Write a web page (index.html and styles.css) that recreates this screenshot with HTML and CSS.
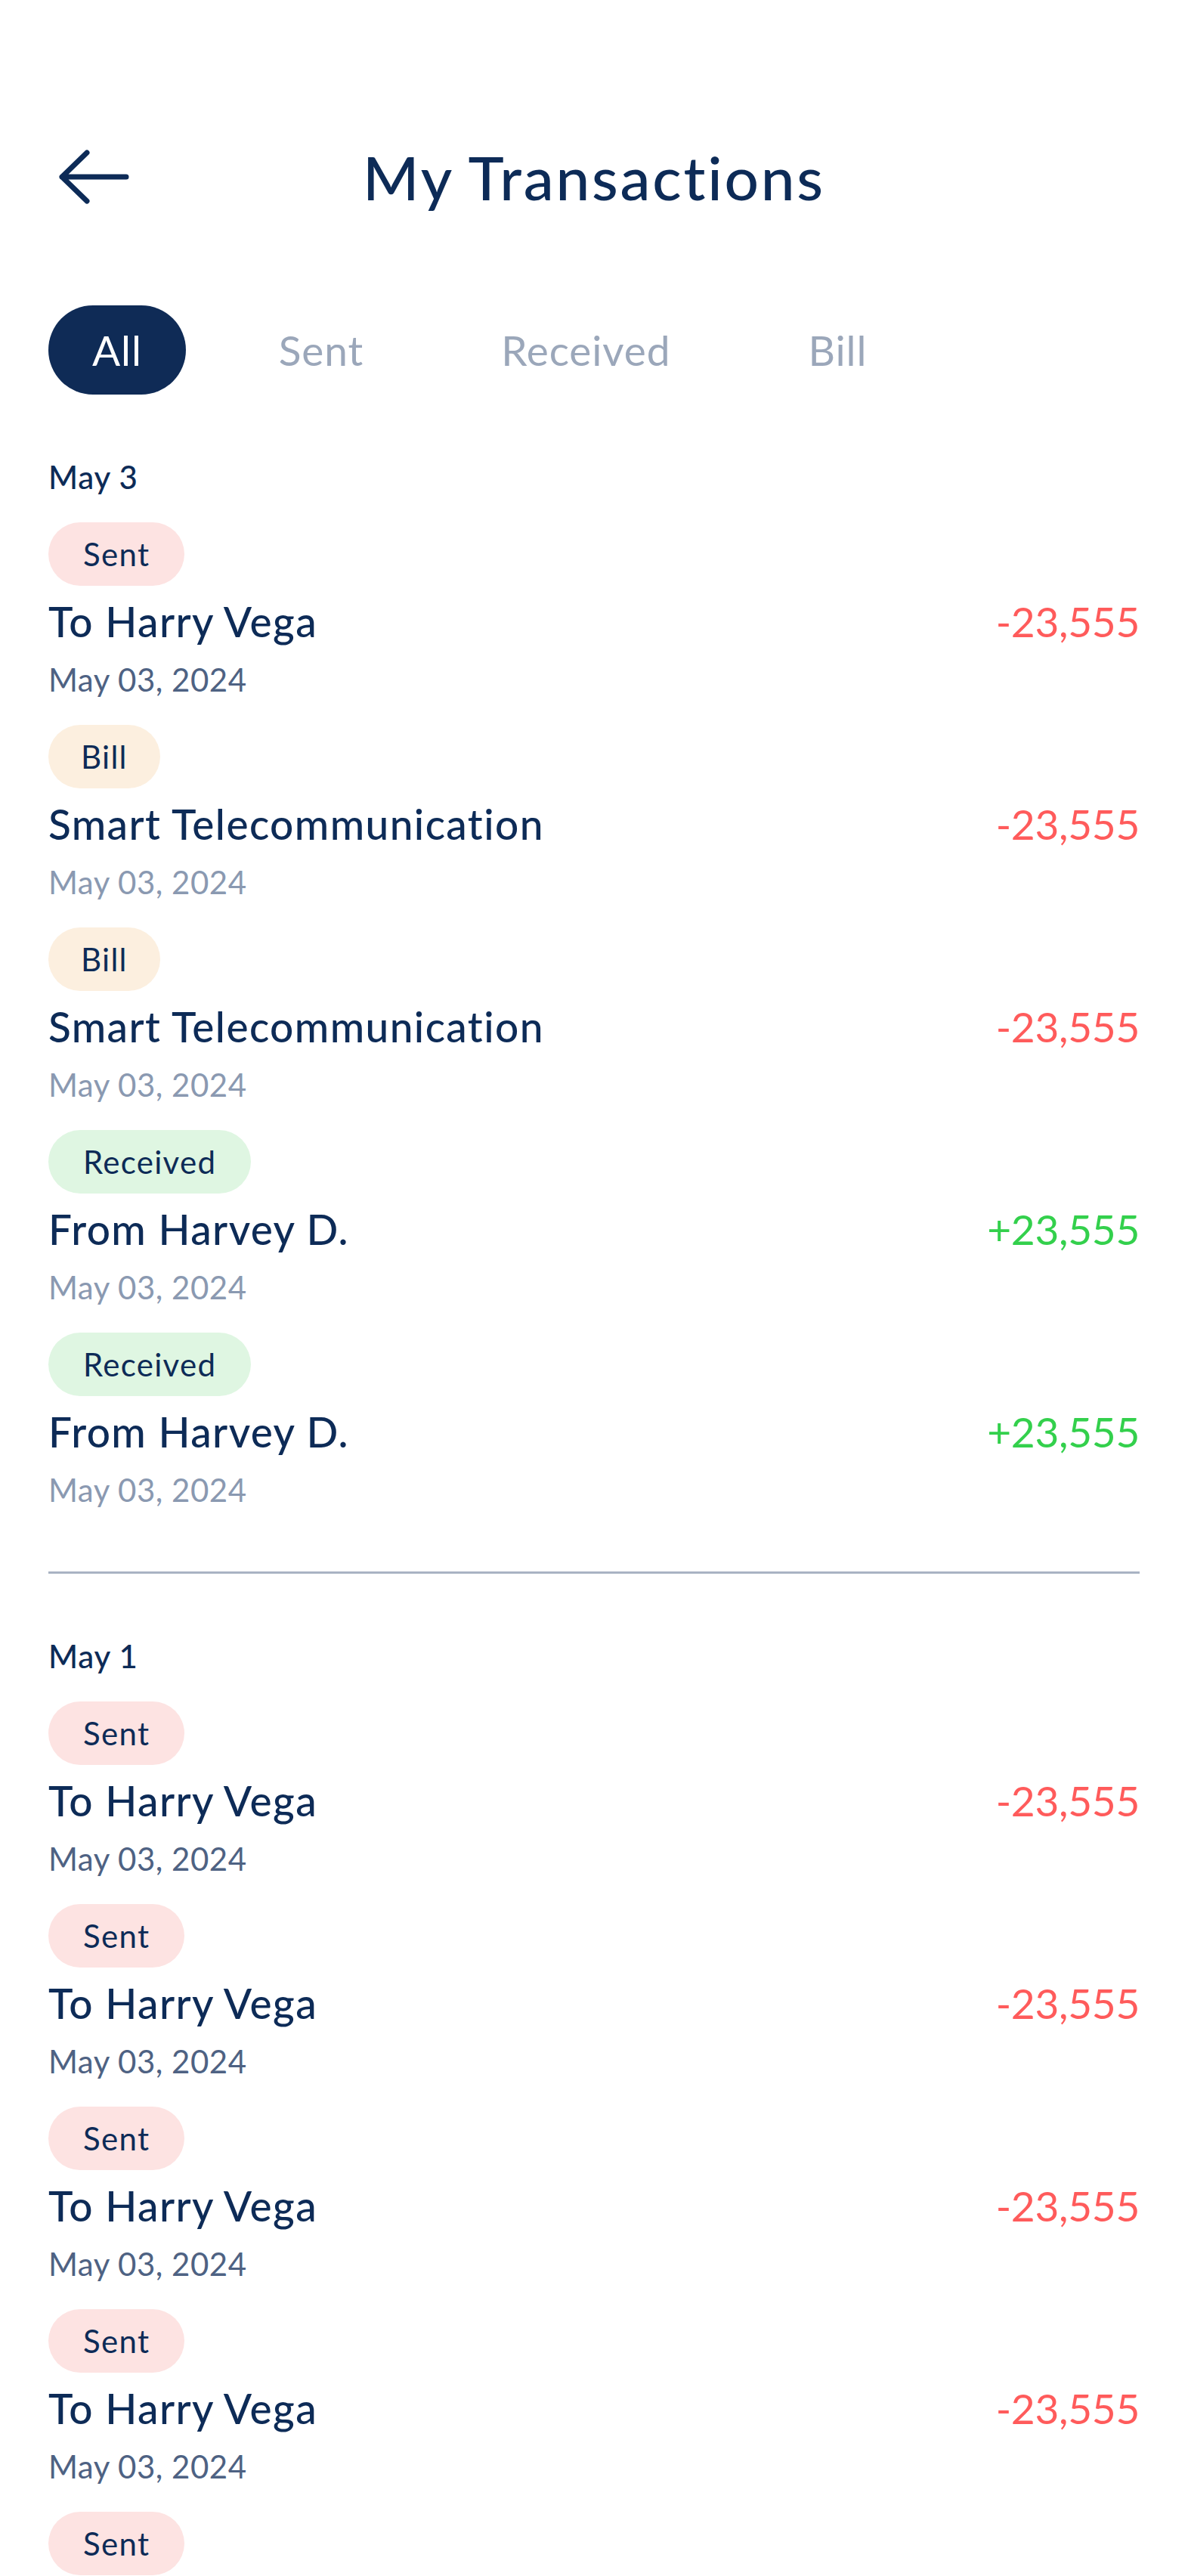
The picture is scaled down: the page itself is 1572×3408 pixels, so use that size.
FILE: index.html
```html
<!DOCTYPE html>
<html lang="en">
<head>
  <meta charset="UTF-8">
  <meta name="viewport" content="width=device-width, initial-scale=1.0">
  <title>My Transactions</title>
  <link rel="stylesheet" href="styles.css">
</head>
<body>

  <!-- Cabecera -->
  <header class="cabecera">
    <button class="volver" type="button" aria-label="Back">
      <svg width="108" height="74" viewBox="0 0 108 74">
        <path d="M51 5 L18 37 L51 69 M18 37 H103" fill="none" stroke="#0d2b57" stroke-width="7" stroke-linecap="round" stroke-linejoin="round"/>
      </svg>
    </button>
    <h1 class="titulo">My Transactions</h1>
    <span></span>
  </header>

  <!-- Filtros -->
  <nav class="filtros">
    <span class="filtro activo">All</span>
    <span class="filtro">Sent</span>
    <span class="filtro">Received</span>
    <span class="filtro">Bill</span>
  </nav>

  <main class="lista">
    <section class="grupo">
      <h2 class="dia">May 3</h2>

      <div class="movimiento">
        <span class="etiqueta enviado">Sent</span>
        <div class="fila">
          <span class="nombre">To Harry Vega</span>
          <span class="monto negativo">-23,555</span>
        </div>
        <span class="fecha">May 03, 2024</span>
      </div>

      <div class="movimiento">
        <span class="etiqueta factura">Bill</span>
        <div class="fila">
          <span class="nombre">Smart Telecommunication</span>
          <span class="monto negativo">-23,555</span>
        </div>
        <span class="fecha clara">May 03, 2024</span>
      </div>

      <div class="movimiento">
        <span class="etiqueta factura">Bill</span>
        <div class="fila">
          <span class="nombre">Smart Telecommunication</span>
          <span class="monto negativo">-23,555</span>
        </div>
        <span class="fecha clara">May 03, 2024</span>
      </div>

      <div class="movimiento">
        <span class="etiqueta recibido">Received</span>
        <div class="fila">
          <span class="nombre">From Harvey D.</span>
          <span class="monto positivo">+23,555</span>
        </div>
        <span class="fecha clara">May 03, 2024</span>
      </div>

      <div class="movimiento">
        <span class="etiqueta recibido">Received</span>
        <div class="fila">
          <span class="nombre">From Harvey D.</span>
          <span class="monto positivo">+23,555</span>
        </div>
        <span class="fecha clara">May 03, 2024</span>
      </div>
    </section>

    <hr class="separador">

    <section class="grupo">
      <h2 class="dia">May 1</h2>

      <div class="movimiento">
        <span class="etiqueta enviado">Sent</span>
        <div class="fila">
          <span class="nombre">To Harry Vega</span>
          <span class="monto negativo">-23,555</span>
        </div>
        <span class="fecha">May 03, 2024</span>
      </div>

      <div class="movimiento">
        <span class="etiqueta enviado">Sent</span>
        <div class="fila">
          <span class="nombre">To Harry Vega</span>
          <span class="monto negativo">-23,555</span>
        </div>
        <span class="fecha">May 03, 2024</span>
      </div>

      <div class="movimiento">
        <span class="etiqueta enviado">Sent</span>
        <div class="fila">
          <span class="nombre">To Harry Vega</span>
          <span class="monto negativo">-23,555</span>
        </div>
        <span class="fecha">May 03, 2024</span>
      </div>

      <div class="movimiento">
        <span class="etiqueta enviado">Sent</span>
        <div class="fila">
          <span class="nombre">To Harry Vega</span>
          <span class="monto negativo">-23,555</span>
        </div>
        <span class="fecha">May 03, 2024</span>
      </div>

      <!-- El resto de la lista queda fuera de la pantalla -->
      <div class="movimiento">
        <span class="etiqueta enviado">Sent</span>
      </div>
    </section>
  </main>

</body>
</html>
```

FILE: styles.css
```css
/* Estilos generales */
body {
  margin: 0;
  padding: 186px 64px 0;
  font-family: Lato, "Open Sans", sans-serif;
  background-color: #ffffff;
  color: #0d2b57;
  overflow: hidden;
}

/* Cabecera */
.cabecera {
  display: grid;
  grid-template-columns: 1fr auto 1fr;
  align-items: center;
}

.volver {
  justify-self: start;
  display: flex;
  padding: 0;
  border: none;
  background: none;
  cursor: pointer;
}

.titulo {
  margin: 0;
  font-size: 80px;
  line-height: 96px;
  font-weight: 500;
  letter-spacing: 2.8px;
}

/* Filtros */
.filtros {
  display: flex;
  gap: 64px;
  margin-top: 122px;
}

.filtro {
  height: 118px;
  padding: 0 59px;
  border-radius: 59px;
  font-size: 55px;
  line-height: 118px;
  letter-spacing: 0.9px;
  color: #9ba7ba;
}

.filtro.activo {
  padding: 0 58px;
  background-color: #0f2b56;
  color: #ffffff;
}

/* Lista de movimientos */
.lista {
  padding-top: 84px;
}

.grupo {
  display: flex;
  flex-direction: column;
  gap: 35px;
}

.dia {
  margin: 0;
  font-size: 42px;
  line-height: 50px;
  font-weight: 500;
  letter-spacing: 0.8px;
}

.movimiento {
  display: flex;
  flex-direction: column;
  align-items: flex-start;
}

.etiqueta {
  height: 84px;
  padding: 0 46px;
  margin-bottom: 14px;
  border-radius: 42px;
  font-size: 42px;
  line-height: 84px;
  letter-spacing: 1.3px;
}

.etiqueta.factura {
  padding: 0 43px;
}

.enviado {
  background-color: #fde3e2;
}

.factura {
  background-color: #fcefdf;
}

.recibido {
  background-color: #dff6e2;
}

.fila {
  display: flex;
  justify-content: space-between;
  align-self: stretch;
  margin-bottom: 19px;
  font-size: 55px;
  line-height: 66px;
}

.nombre {
  font-weight: 500;
  letter-spacing: 1.4px;
}

.monto {
  letter-spacing: -0.3px;
}

.negativo {
  color: #ff5b5b;
}

.positivo {
  color: #33d04c;
}

.fecha {
  font-size: 42px;
  line-height: 50px;
  letter-spacing: 0.5px;
  color: #4e6283;
}

.fecha.clara {
  color: #8a99b1;
}

.separador {
  height: 3px;
  margin: 83px 0 84px;
  border: none;
  background-color: #a9b3c3;
}
```
